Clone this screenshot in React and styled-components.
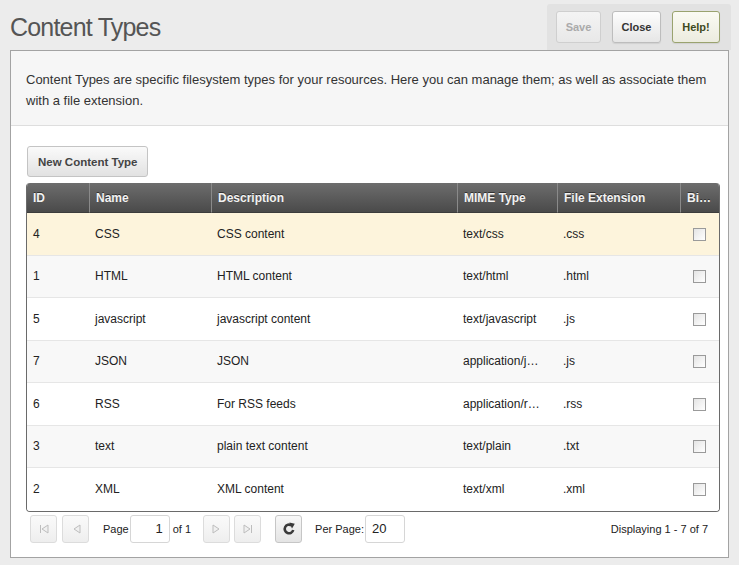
import React from 'react'
import styled, { createGlobalStyle, css } from 'styled-components'

const ROWS = [
  { id: 4, name: 'CSS', description: 'CSS content', mime: 'text/css', ext: '.css' },
  { id: 1, name: 'HTML', description: 'HTML content', mime: 'text/html', ext: '.html' },
  { id: 5, name: 'javascript', description: 'javascript content', mime: 'text/javascript', ext: '.js' },
  { id: 7, name: 'JSON', description: 'JSON', mime: 'application/json', ext: '.js' },
  { id: 6, name: 'RSS', description: 'For RSS feeds', mime: 'application/rss+xml', ext: '.rss' },
  { id: 3, name: 'text', description: 'plain text content', mime: 'text/plain', ext: '.txt' },
  { id: 2, name: 'XML', description: 'XML content', mime: 'text/xml', ext: '.xml' },
]

const COLUMNS = [
  { key: 'id', label: 'ID', width: 62 },
  { key: 'name', label: 'Name', width: 122 },
  { key: 'description', label: 'Description', width: 246 },
  { key: 'mime', label: 'MIME Type', width: 100 },
  { key: 'ext', label: 'File Extension', width: 123 },
  { key: 'binary', label: 'Binary', width: 39 },
]

const GlobalStyle = createGlobalStyle`
  html, body {
    margin: 0;
    padding: 0;
    background: #ececec;
    font-family: "Liberation Sans", Arial, sans-serif;
    color: #333;
  }
`

const PagerIcon = ({ dir, end }) => (
  <svg width="12" height="12" viewBox="0 0 12 12">
    <g transform={dir === 'left' ? '' : 'translate(12 0) scale(-1 1)'}>
      {end && <line x1="2.5" y1="2" x2="2.5" y2="10" stroke="#bdbdbd" strokeWidth="1" />}
      <path d="M10 2 L4 6 L10 10 Z" fill="#f0f0f0" stroke="#bdbdbd" strokeWidth="1" />
    </g>
  </svg>
)

const RefreshIcon = () => (
  <svg width="14" height="14" viewBox="0 0 14 14">
    <path d="M11.2 8 A4.3 4.3 0 1 1 9.4 3.4" fill="none" stroke="#3a3a3a" strokeWidth="2.6" />
    <path d="M7.4 0.6 L12.8 1.8 L10 6.6 Z" fill="#3a3a3a" />
  </svg>
)

const App = () => {
  return (
    <>
      <GlobalStyle />
      <Header>
        <Title>Content Types</Title>
        <Toolbar>
          <ToolButton $w={45} $disabled>
            Save
          </ToolButton>
          <ToolButton $w={49}>Close</ToolButton>
          <ToolButton $w={48} $help>
            Help!
          </ToolButton>
        </Toolbar>
      </Header>
      <Panel>
        <Intro>
          Content Types are specific filesystem types for your resources. Here you can manage them; as well as
          associate them with a file extension.
        </Intro>
        <Body>
          <NewButton>New Content Type</NewButton>
          <Grid>
            <colgroup>
              {COLUMNS.map((c) => (
                <col key={c.key} style={{ width: c.width }} />
              ))}
            </colgroup>
            <thead>
              <tr>
                {COLUMNS.map((c) => (
                  <HeadCell key={c.key}>{c.label}</HeadCell>
                ))}
              </tr>
            </thead>
            <tbody>
              {ROWS.map((row, i) => (
                <Row key={row.id} $selected={i === 0} $alt={i % 2 === 1}>
                  <Cell>{row.id}</Cell>
                  <Cell>{row.name}</Cell>
                  <Cell>{row.description}</Cell>
                  <Cell>{row.mime}</Cell>
                  <Cell>{row.ext}</Cell>
                  <CheckCell>
                    <Check />
                  </CheckCell>
                </Row>
              ))}
            </tbody>
          </Grid>
          <Pager>
            <PagerButton $gap={0}>
              <PagerIcon dir="left" end />
            </PagerButton>
            <PagerButton>
              <PagerIcon dir="left" />
            </PagerButton>
            <PagerLabel $gap={14}>Page</PagerLabel>
            <PagerInput $gap={1} $align="right" defaultValue="1" />
            <PagerLabel $gap={3}>of 1</PagerLabel>
            <PagerButton $gap={12}>
              <PagerIcon dir="right" />
            </PagerButton>
            <PagerButton $gap={4}>
              <PagerIcon dir="right" end />
            </PagerButton>
            <PagerButton $gap={14} $active>
              <RefreshIcon />
            </PagerButton>
            <PagerLabel $gap={13}>Per Page:</PagerLabel>
            <PagerInput $gap={1} defaultValue="20" />
            <Displaying>Displaying 1 - 7 of 7</Displaying>
          </Pager>
        </Body>
      </Panel>
    </>
  )
}

const Header = styled.header`
  display: flex;
  justify-content: space-between;
  align-items: flex-end;
  height: 50px;
  padding: 0 8px 0 10px;
`

const Title = styled.h1`
  align-self: center;
  margin: 4px 0 0;
  font-size: 25px;
  font-weight: normal;
  letter-spacing: -0.8px;
  color: #555;
`

const Toolbar = styled.div`
  display: flex;
  gap: 11px;
  height: 46px;
  padding: 7px 11px 0 9px;
  box-sizing: border-box;
  background: #e2e2e2;
  border-radius: 3px 3px 0 0;
`

const ToolButton = styled.button`
  width: ${(props) => props.$w}px;
  height: 32px;
  padding: 0;
  border: 1px solid #bdbdbd;
  border-radius: 3px;
  background: linear-gradient(#fdfdfd, #e6e6e6);
  font-family: "Liberation Sans", Arial, sans-serif;
  font-size: 11px;
  font-weight: bold;
  color: #333;
  box-shadow: 0 1px 1px rgba(0, 0, 0, 0.08);

  ${(props) =>
    props.$disabled &&
    css`
      color: #aaa;
      border-color: #cfcfcf;
      background: linear-gradient(#f4f4f4, #e8e8e8);
      box-shadow: none;
    `}

  ${(props) =>
    props.$help &&
    css`
      border-color: #9aa36f;
      color: #3f4a22;
      background: linear-gradient(#fbfbf3, #ececdf);
    `}
`

const Panel = styled.main`
  margin: 0 10px;
  height: 508px;
  box-sizing: border-box;
  border: 1px solid #a3a3a3;
  background: #fff;
`

const Intro = styled.p`
  margin: 0;
  padding: 18px 15px 14px;
  border-bottom: 1px solid #dedede;
  background: #f6f6f6;
  font-size: 13px;
  line-height: 21px;
  color: #333;
`

const Body = styled.div`
  padding: 20px 10px 0 15px;
`

const NewButton = styled.button`
  display: block;
  height: 31px;
  padding: 0 10px;
  margin: 0 0 6px 1px;
  border: 1px solid #c4c4c4;
  border-radius: 3px;
  background: linear-gradient(#fafafa, #e2e2e2);
  font-family: "Liberation Sans", Arial, sans-serif;
  font-size: 11.5px;
  font-weight: bold;
  color: #444;
`

const Grid = styled.table`
  width: 692px;
  table-layout: fixed;
  border-collapse: separate;
  border-spacing: 0;
  border: 1px solid #6a6a6a;
  border-top: none;
  border-radius: 4px;
  overflow: hidden;
  font-size: 12px;
`

const HeadCell = styled.th`
  height: 30px;
  padding: 0 6px;
  box-sizing: border-box;
  text-align: left;
  white-space: nowrap;
  overflow: hidden;
  text-overflow: ellipsis;
  background: linear-gradient(#6d6d6d, #4a4a4a);
  border-left: 1px solid #8a8a8a;
  border-bottom: 1px solid #3c3c3c;
  color: #f2f2f2;
  font-size: 12px;
  font-weight: bold;
  text-shadow: 0 -1px 0 #333;

  &:first-child {
    border-left: none;
  }
`

const Row = styled.tr`
  background: ${(props) => (props.$selected ? '#fdf4dc' : props.$alt ? '#f8f8f8' : '#fff')};
`

const Cell = styled.td`
  height: 42.5px;
  padding: 0 16px 0 6px;
  box-sizing: border-box;
  border-bottom: 1px solid #e6e6e6;
  white-space: nowrap;
  overflow: hidden;
  text-overflow: ellipsis;
  color: #222;

  tr:last-child > & {
    border-bottom: none;
  }
`

const CheckCell = styled(Cell)`
  padding: 0;
  text-align: center;
`

const Check = styled.span`
  display: inline-block;
  width: 11px;
  height: 11px;
  vertical-align: middle;
  border: 1px solid #9a9a9a;
  background: linear-gradient(135deg, #e4e4e4, #fff);
`

const Pager = styled.div`
  display: flex;
  align-items: center;
  height: 28px;
  margin-top: 3px;
  padding: 0 10px 0 4px;
  font-size: 11px;
  color: #222;
`

const PagerButton = styled.button`
  display: flex;
  align-items: center;
  justify-content: center;
  flex: none;
  width: 27px;
  height: 28px;
  margin-left: ${(props) => (props.$gap ?? 5) + 'px'};
  padding: 0;
  border: 1px solid #dcdcdc;
  border-radius: 3px;
  background: linear-gradient(#fafafa, #eeeeee);

  ${(props) =>
    props.$active &&
    css`
      border-color: #c6c6c6;
      background: linear-gradient(#f8f8f8, #e4e4e4);
    `}
`

const PagerLabel = styled.span`
  margin-left: ${(props) => props.$gap}px;
`

const PagerInput = styled.input`
  flex: none;
  width: 40px;
  height: 28px;
  box-sizing: border-box;
  margin: 0 0 0 ${(props) => (props.$gap ?? 0) + 'px'};
  padding: 0 6px;
  border: 1px solid #d6d6d6;
  border-radius: 3px;
  font-family: "Liberation Sans", Arial, sans-serif;
  font-size: 13px;
  color: #222;
  text-align: ${(props) => props.$align || 'left'};
`

const Displaying = styled.span`
  margin-left: auto;
`

export default App
